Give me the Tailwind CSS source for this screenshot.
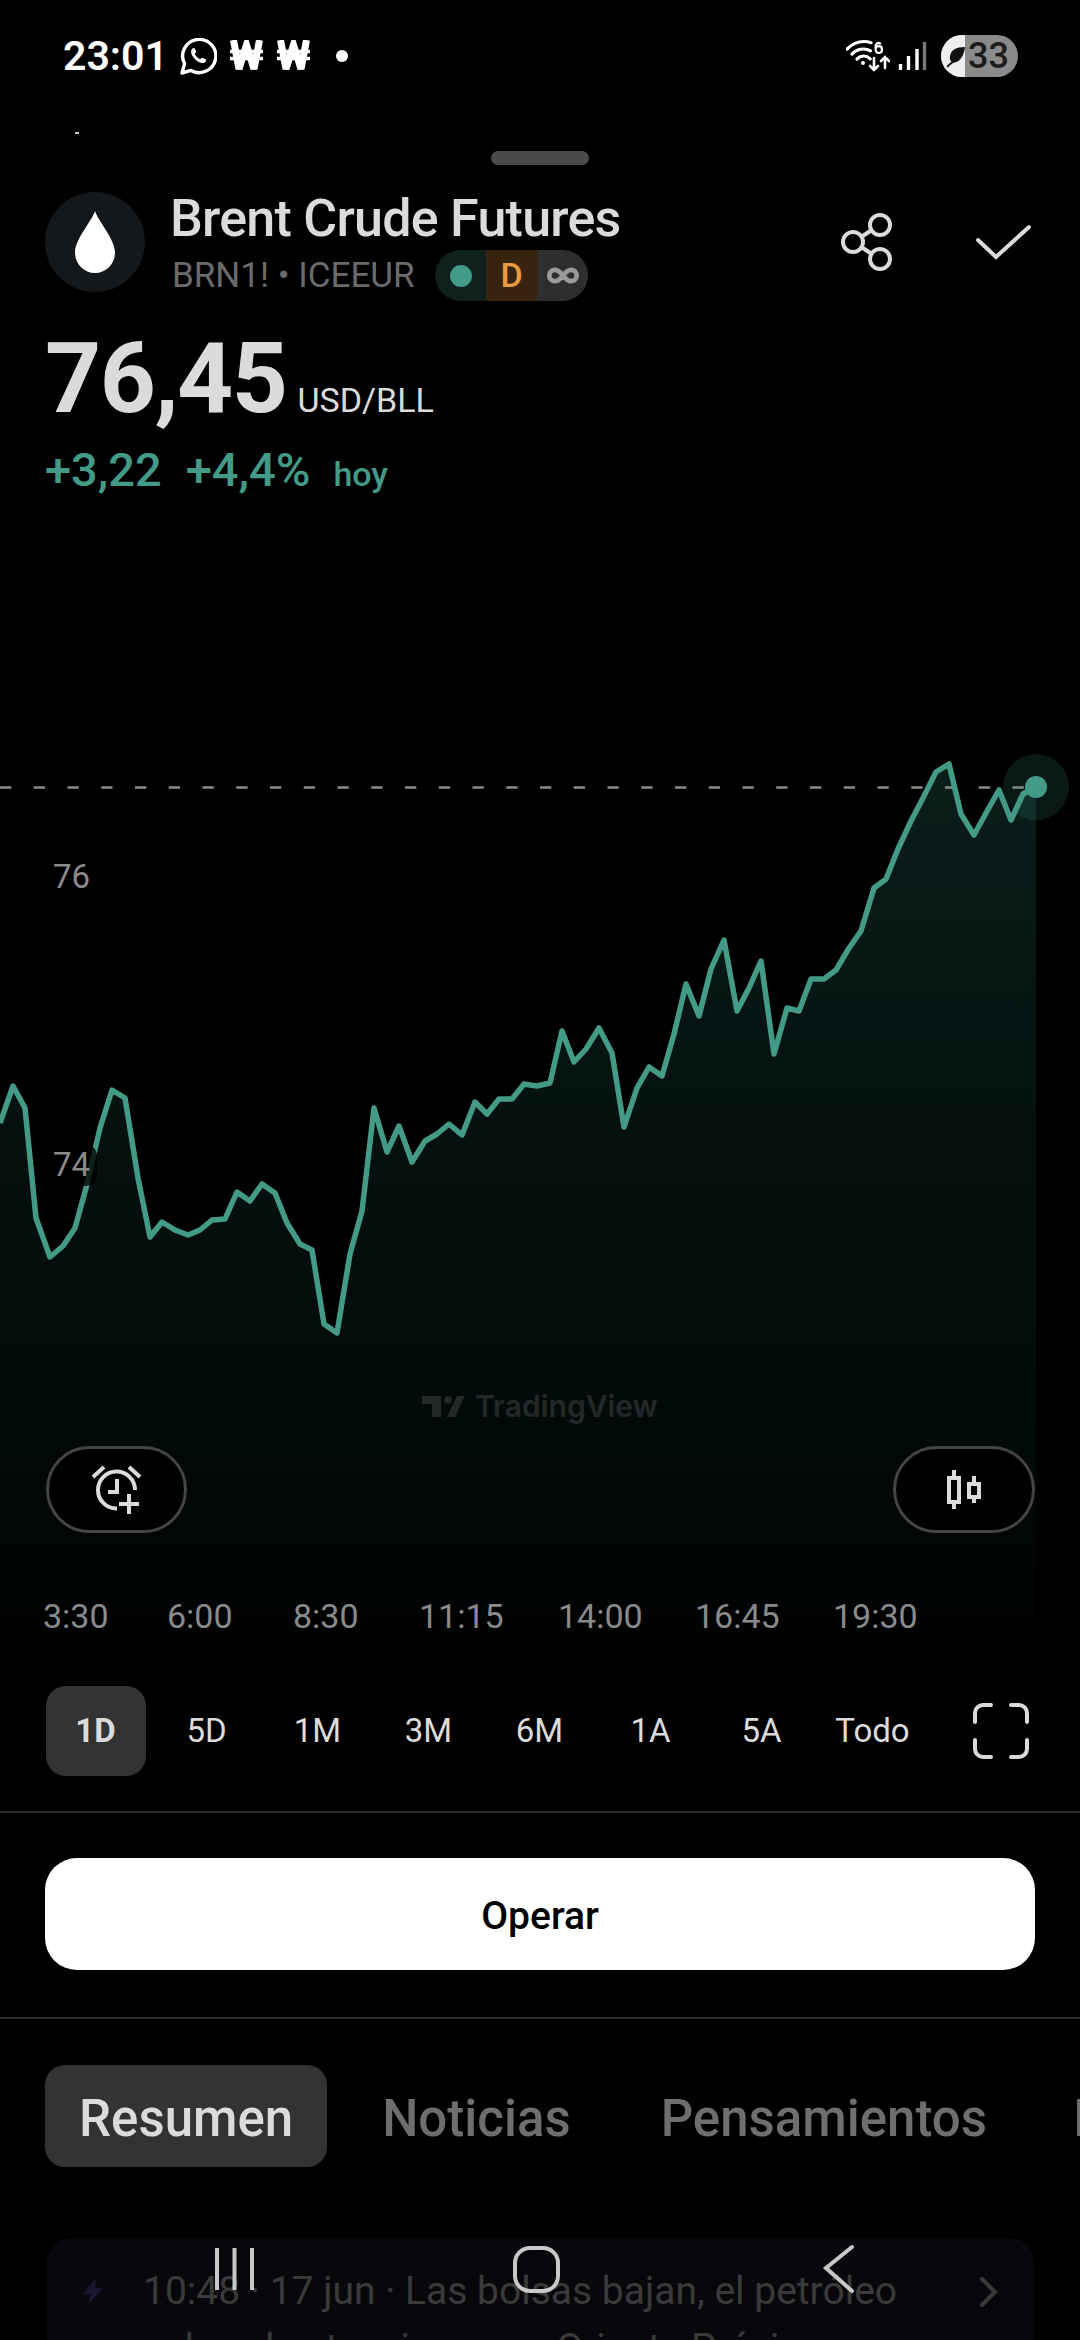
<!DOCTYPE html>
<html lang="es">

<head>
    <meta charset="UTF-8">
    <meta name="viewport" content="width=device-width, initial-scale=1.0">
    <title>Brent Crude Futures</title>
    <script src="https://cdn.jsdelivr.net/npm/@tailwindcss/browser@4"></script>
</head>

<body class="bg-black">
    <div class="relative w-[1080px] h-[2340px] overflow-hidden bg-black font-['Roboto',sans-serif] text-[#dbdbdb]">

        <!-- Status bar -->
        <div class="h-[110px] flex items-start justify-between pl-[63px] pr-[62px]">
            <div class="flex items-center h-[112px] text-white">
                <span class="text-[41px] leading-[46px] font-semibold w-[117px]">23:01</span>
                <svg width="37" height="37" viewBox="0 0 37 37" fill="none" stroke="white" stroke-width="3.4" stroke-linejoin="round">
                    <path d="M2 35l2.6-9.2A16.6 16.6 0 1 1 11 32.4z" />
                    <path d="M12.5 10.5c-1.6 1.4-1.8 3.6-.8 6 1.6 3.6 4.6 6.600 8.200 8 2.400 .9 4.600 .7 5.900-1 .6-.8 .5-1.700-.3-2.200l-2.600-1.400c-.7-.4-1.300-.2-1.800 .4l-.8 1c-2.600-1-4.600-3-5.600-5.500l.9-.9c.5-.5 .6-1.100 .3-1.800l-1.200-2.500c-.4-.8-1.300-.9-2.200-.1z" fill="white" stroke="none" />
                </svg>
                <svg class="ml-[13px]" width="33" height="32" viewBox="0 0 33 32" fill="none" stroke="white">
                    <path d="M3.500 0l5.500 29 7.500-24 7.500 24 5.500-29" stroke-width="7" />
                    <path d="M0 11.500h33M0 18.500h33" stroke-width="3.500" />
                </svg>
                <svg class="ml-[14px]" width="33" height="32" viewBox="0 0 33 32" fill="none" stroke="white">
                    <path d="M3.500 0l5.500 29 7.500-24 7.500 24 5.500-29" stroke-width="7" />
                    <path d="M0 11.500h33M0 18.500h33" stroke-width="3.500" />
                </svg>
                <span class="ml-[26px] w-[12px] h-[12px] rounded-full bg-white"></span>
            </div>
            <div class="flex items-start pt-[35px]">
                <svg width="44" height="40" viewBox="846 35 44 40" fill="none" stroke="white" stroke-linecap="round">
                    <path d="M847 49c5-5 11-7.500 17-7.500 3 0 5 .5 7 1.200" stroke-width="3.200" />
                    <path d="M852 54c3.500-3.500 7.500-5 11.500-5 2.500 0 5 .6 7 1.800" stroke-width="3.200" />
                    <path d="M857 59c2-2 4.500-3 6.800-3s4.500 1 6.400 2.800" stroke-width="3.200" />
                    <circle cx="863" cy="63" r="2" fill="white" stroke="none" />
                    <path d="M880 43.500c-2-1.500-4.500-.5-4.500 4.500 0 2.500 1 5 3.300 5s3.200-1.700 3.200-3.500-1.200-3.300-3.200-3.300-3.300 1.300-3.300 2.800" stroke-width="2.200" />
                    <path d="M874 58v12M870 66l4 4 4-4" stroke-width="2.600" />
                    <path d="M885 68V57M881 61l4-4 4 4" stroke-width="2.600" />
                </svg>
                <svg class="ml-[8px] mt-[6px]" width="30" height="30" viewBox="898 40 30 30" fill="none" stroke-width="3.400">
                    <path d="M900.500 69v-6M908.500 69V55M917 69V48" stroke="white" />
                    <path d="M924.500 69V41" stroke="#777" />
                </svg>
                <div class="relative ml-[13px] w-[77px] h-[42px] rounded-full overflow-hidden bg-[#8a8a8a] flex items-center justify-end pr-[9px]">
                    <div class="absolute left-0 top-0 bottom-0 w-[24px] bg-[#eeeeee]"></div>
                    <svg class="absolute left-[4px] top-[11px]" width="22" height="22" viewBox="0 0 22 22" fill="#111">
                        <path d="M20 1C11 1 6 4 5 10c-.4 2.500 .3 4.500 1.500 6C4.500 17 3 18.500 1.500 20.500l1.500 1C5 19 7 17.500 9.500 16.500 15 15.500 19 10 20 1z" />
                    </svg>
                    <span class="relative text-[#1c1c1c] text-[36px] leading-[42px] font-medium">33</span>
                </div>
            </div>
        </div>

        <!-- Leftover of the sheet behind -->
        <div class="absolute left-[75px] top-[132px] w-[4px] h-[2px] bg-[#cccccc]"></div>

        <!-- Drag handle -->
        <div class="mt-[41px] mx-auto w-[98px] h-[14px] rounded-full bg-[#4a4a4a]"></div>

        <!-- Symbol header -->
        <div class="mt-[24px] px-[45px] flex items-start">
            <div class="mt-[3px] w-[100px] h-[100px] rounded-full bg-[#14181b] flex items-center justify-center">
                <svg width="40" height="62" viewBox="0 0 40 62" fill="white">
                    <path d="M20 0C23 10 40 28 40 41.500 40 53 31 62 20 62S0 53 0 41.500C0 28 17 10 20 0z" />
                </svg>
            </div>
            <div class="ml-[25px]">
                <div class="text-[52px] leading-[60px] font-medium tracking-[-0.75px] whitespace-nowrap">Brent Crude Futures</div>
                <div class="mt-[1px] h-[51px] pl-[2px] flex items-center">
                    <span class="w-[242px] pt-[2px] text-[35px] text-[#6a6a6a] whitespace-nowrap">BRN1! • ICEEUR</span>
                    <div class="ml-[21px] flex h-[51px] w-[153px] rounded-full overflow-hidden">
                        <div class="w-[51px] bg-[#0e211d] flex items-center justify-center">
                            <span class="w-[22px] h-[22px] rounded-full bg-[#439a86]"></span>
                        </div>
                        <div class="w-[51px] bg-[#38230f] flex items-center justify-center text-[34px] font-medium text-[#ea9b3c]">D</div>
                        <div class="w-[51px] bg-[#2e2e2e] flex items-center justify-center">
                            <svg width="34" height="17" viewBox="0 0 36 18" fill="none" stroke="#9a9a9a" stroke-width="5">
                                <path d="M18 9c-3-4-5.500-6-8.500-6a6 6 0 0 0 0 12c3 0 5.500-2 8.500-6s5.500-6 8.500-6a6 6 0 0 1 0 12c-3 0-5.500-2-8.500-6z" />
                            </svg>
                        </div>
                    </div>
                </div>
            </div>
            <div class="ml-auto mr-[3px] mt-[23px] flex items-start">
                <svg width="56" height="60" viewBox="838 212 56 60" fill="none" stroke="#dbdbdb" stroke-width="4">
                    <circle cx="879" cy="225" r="10" />
                    <circle cx="852" cy="242" r="10" />
                    <circle cx="879" cy="259" r="10" />
                    <path d="M861 236.500l9-6M861 247.500l9 6" />
                </svg>
                <svg class="ml-[81px] mt-[12px]" width="56" height="36" viewBox="975 224 56 36" fill="none" stroke="#dbdbdb" stroke-width="4" stroke-linecap="round">
                    <path d="M977 240l18 17 33-30" />
                </svg>
            </div>
        </div>

        <!-- Quote -->
        <div class="mt-[29px] px-[45px] flex items-baseline">
            <span class="text-[98px] leading-[98px] font-bold tracking-[-1.500px]">76,45</span>
            <span class="ml-[11px] text-[34px]">USD/BLL</span>
        </div>
        <div class="mt-[14px] px-[45px] flex items-baseline text-[#439a86]">
            <span class="text-[47px] leading-[56px] font-medium">+3,22</span>
            <span class="ml-[24px] text-[47px] leading-[56px] font-medium">+4,4%</span>
            <span class="ml-[23px] text-[34px] font-medium">hoy</span>
        </div>

        <!-- Chart -->
        <div class="relative h-[1186px]">
            <svg width="1080" height="1186" viewBox="0 499 1080 1186" class="block">
                <defs>
                    <linearGradient id="areaFill" gradientUnits="userSpaceOnUse" x1="0" y1="763" x2="0" y2="1680">
                        <stop offset="0" stop-color="#0a1e1a" />
                        <stop offset="0.4" stop-color="#04110f" />
                        <stop offset="0.75" stop-color="#020a09" />
                        <stop offset="1" stop-color="#000000" />
                    </linearGradient>
                </defs>
                <path fill="url(#areaFill)" d="M0 1122L13 1085 25 1107 36 1217 50 1256 63 1245 75 1227 86 1187 100 1127 112 1089 125 1097 138 1177 150 1236 162 1221 175 1229 188 1234 200 1229 212 1219 225 1218 237 1191 250 1200 262 1183 275 1192 287 1222 300 1243 312 1249 324 1323 337 1332 350 1253 362 1210 374 1107 387 1151 399 1125 412 1161 425 1140 437 1133 449 1123 462 1134 475 1101 487 1113 499 1098 512 1098 524 1083 537 1085 550 1082 562 1030 574 1061 586 1048 599 1027 612 1052 624 1126 637 1087 649 1066 662 1075 674 1033 686 983 699 1015 711 968 724 939 737 1010 749 987 761 960 774 1053 787 1007 799 1010 811 978 824 978 836 969 849 947 861 930 874 887 886 878 898 848 911 820 923 797 936 771 949 763 961 813 974 834 986 812 999 789 1011 819 1023 793 1036 786V1685H0z" />
                <line x1="0" y1="786.500" x2="1036" y2="786.500" stroke="#8a8a8a" stroke-width="2.500" stroke-dasharray="11.300 22.450" />
                <polyline fill="none" stroke="#439a86" stroke-width="5.500" stroke-linejoin="round" points="0,1122 13,1085 25,1107 36,1217 50,1256 63,1245 75,1227 86,1187 100,1127 112,1089 125,1097 138,1177 150,1236 162,1221 175,1229 188,1234 200,1229 212,1219 225,1218 237,1191 250,1200 262,1183 275,1192 287,1222 300,1243 312,1249 324,1323 337,1332 350,1253 362,1210 374,1107 387,1151 399,1125 412,1161 425,1140 437,1133 449,1123 462,1134 475,1101 487,1113 499,1098 512,1098 524,1083 537,1085 550,1082 562,1030 574,1061 586,1048 599,1027 612,1052 624,1126 637,1087 649,1066 662,1075 674,1033 686,983 699,1015 711,968 724,939 737,1010 749,987 761,960 774,1053 787,1007 799,1010 811,978 824,978 836,969 849,947 861,930 874,887 886,878 898,848 911,820 923,797 936,771 949,763 961,813 974,834 986,812 999,789 1011,819 1023,793 1036,786" />
                <circle cx="1036" cy="786" r="33" fill="#439a86" fill-opacity="0.16" />
                <circle cx="1036" cy="786" r="11" fill="#439a86" />

                <!-- Price scale -->
                <rect x="44" y="1143" width="53" height="42" rx="12" fill="#000000" fill-opacity="0.78" />
                <text x="53" y="887" font-size="33" fill="#8a8a8a">76</text>
                <text x="53" y="1175" font-size="33" fill="#8a8a8a">74</text>

                <!-- Watermark -->
                <g fill="#232828">
                    <path d="M422 1395H441V1416H432V1403H422z" />
                    <circle cx="448" cy="1399" r="3.800" />
                    <path d="M457 1395H464.500L455 1416H447z" />
                    <text x="475" y="1416" font-size="30" font-weight="600" font-family="Inter">TradingView</text>
                </g>

                <!-- Time scale -->
                <g font-size="34" fill="#8a8a8a">
                    <text x="43" y="1627">3:30</text>
                    <text x="167" y="1627">6:00</text>
                    <text x="293" y="1627">8:30</text>
                    <text x="419" y="1627">11:15</text>
                    <text x="558" y="1627">14:00</text>
                    <text x="695" y="1627">16:45</text>
                    <text x="833" y="1627">19:30</text>
                </g>
            </svg>

            <!-- Floating chart buttons -->
            <div class="absolute left-[46px] top-[946px] w-[141px] h-[87px] rounded-full border-[3px] border-[#444444] bg-black flex items-center justify-center">
                <svg width="50" height="50" viewBox="92 1464 50 50" fill="none" stroke="#dbdbdb" stroke-width="4">
                    <path d="M135 1489a18.500 18.500 0 1 0-18 18.500" />
                    <path d="M93 1476l11-10M129 1466l11 10" />
                    <path d="M117 1478v13h-9" />
                    <path d="M119 1503h20M129 1493v20" />
                </svg>
            </div>
            <div class="absolute left-[893px] top-[946px] w-[142px] h-[87px] rounded-full border-[3px] border-[#444444] bg-black flex items-center justify-center">
                <svg width="38" height="40" viewBox="945 1470 38 40" fill="none" stroke="#dbdbdb" stroke-width="4">
                    <rect x="949" y="1478" width="10" height="24" />
                    <path d="M954 1470v8M954 1502v7" />
                    <rect x="969" y="1484" width="10" height="13" />
                    <path d="M974 1476v8M974 1497v6" />
                </svg>
            </div>
        </div>

        <!-- Range selector -->
        <div class="h-[90px] pl-[40px] flex items-center text-[33px] text-[#dbdbdb]">
            <div class="w-[111px] flex justify-center">
                <div class="w-[100px] h-[90px] rounded-[20px] bg-[#333333] flex items-center justify-center font-bold">1D</div>
            </div>
            <div class="w-[111px] text-center">5D</div>
            <div class="w-[111px] text-center">1M</div>
            <div class="w-[111px] text-center">3M</div>
            <div class="w-[111px] text-center">6M</div>
            <div class="w-[111px] text-center">1A</div>
            <div class="w-[111px] text-center">5A</div>
            <div class="w-[111px] text-center">Todo</div>
            <svg class="ml-[45px]" width="56" height="56" viewBox="0 0 56 56" fill="none" stroke="#dbdbdb" stroke-width="4" stroke-linecap="round">
                <path d="M2 19V10a8 8 0 0 1 8-8h8M38 2h8a8 8 0 0 1 8 8v9M54 37v9a8 8 0 0 1-8 8h-8M18 54h-8a8 8 0 0 1-8-8v-9" />
            </svg>
        </div>

        <div class="mt-[35px] h-[2px] bg-[#2a2a2a]"></div>

        <!-- Trade button -->
        <div class="mt-[45px] mx-[45px] h-[112px] pt-[4px] rounded-[32px] bg-white flex items-center justify-center text-[39px] font-medium text-black">Operar</div>

        <div class="mt-[47px] h-[2px] bg-[#2a2a2a]"></div>

        <!-- Tabs -->
        <div class="mt-[46px] pl-[45px] flex gap-[22px] text-[51px] font-medium whitespace-nowrap text-[#6e6e6e]">
            <div class="h-[102px] px-[34px] pt-[6px] rounded-[20px] bg-[#333333] text-[#dbdbdb] flex items-center">Resumen</div>
            <div class="h-[102px] px-[34px] pt-[6px] -ml-[1px] flex items-center">Noticias</div>
            <div class="h-[102px] px-[34px] pt-[6px] flex items-center">Pensamientos</div>
            <div class="h-[102px] -ml-[4px] px-[34px] pt-[6px] flex items-center">Ideas</div>
        </div>

        <!-- News card -->
        <div class="mt-[71px] ml-[47px] w-[987px] h-[200px] rounded-[24px] bg-[#08080c] pt-[25px] flex items-start">
            <svg class="ml-[36px] mt-[15px]" width="20" height="27" viewBox="0 0 20 27" fill="#1a1530">
                <path d="M13 0L0 16h8L5 27 20 10h-8z" />
            </svg>
            <div class="ml-[40px] w-[770px] text-[39px] leading-[57px] text-[#3a3a3a]">10:48 · 17 jun · Las bolsas bajan, el petróleo sube y las tensiones en Oriente Próximo se</div>
            <svg class="ml-[66px] mt-[13px]" width="20" height="32" viewBox="0 0 20 32" fill="none" stroke="#3a3a3a" stroke-width="4" stroke-linecap="round">
                <path d="M3 3l13 13L3 29" />
            </svg>
        </div>

        <!-- System navigation, over the page -->
        <svg class="absolute left-0 top-[2240px]" width="1080" height="60" viewBox="0 2240 1080 60" fill="none" stroke="#c8c8c8" stroke-width="4">
            <path d="M217 2248v42M234.500 2248v42M252 2248v42" />
            <rect x="515" y="2248" width="43" height="43" rx="15" />
            <path d="M852 2247l-26 21 26 23" stroke-linecap="round" />
        </svg>
    </div>
</body>

</html>
